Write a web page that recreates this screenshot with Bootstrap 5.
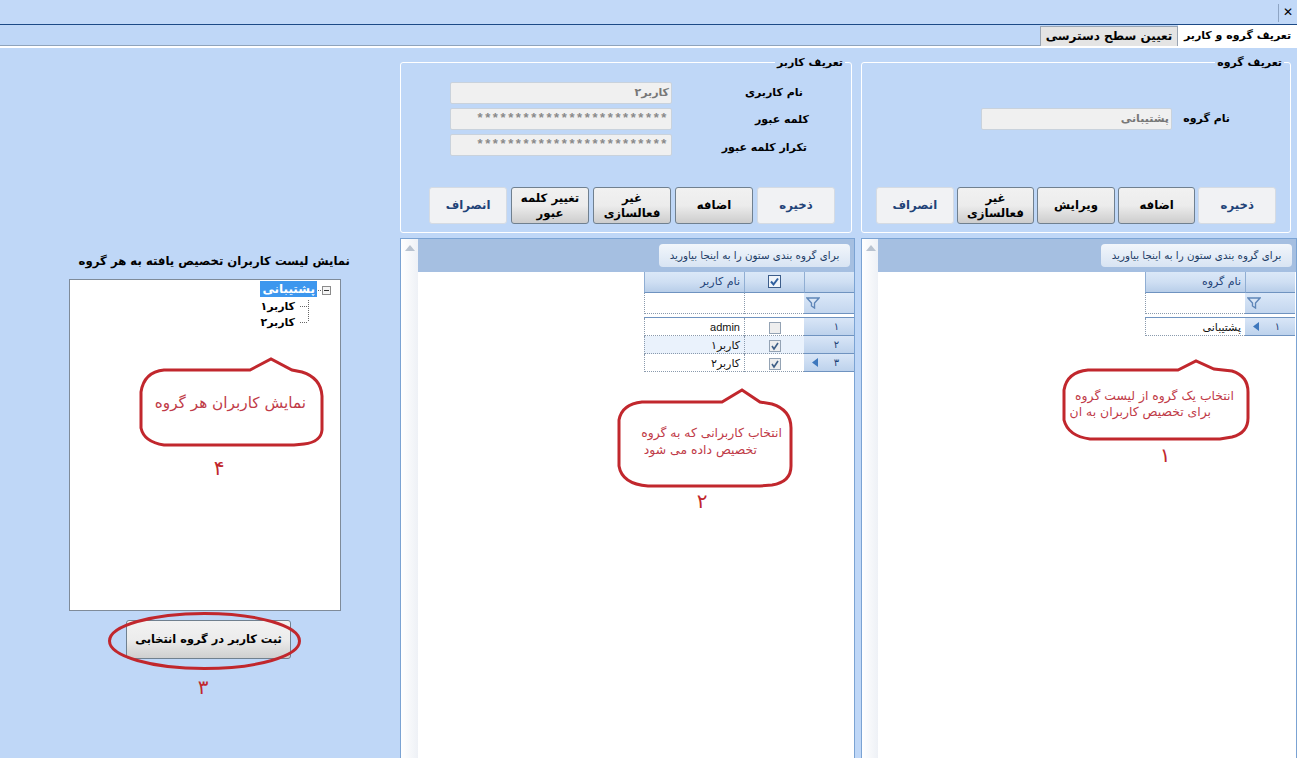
<!DOCTYPE html>
<html lang="fa">
<head>
<meta charset="utf-8">
<title>تعریف گروه و کاربر</title>
<link href="https://cdn.jsdelivr.net/npm/bootstrap@5.3.0/dist/css/bootstrap.min.css" rel="stylesheet">
<style>
html,body{height:758px;overflow:hidden}
body{background:#bfd7f7;font-family:"DejaVu Sans","Liberation Sans",sans-serif;color:#000;position:relative;width:1297px}
.topstrip{height:25px;background:#c2d9f8;border-bottom:1px solid #1c4a86}
.closex{width:19px;height:18px;border-left:1px solid #8ea5c4;margin-top:4px;font-size:12px;line-height:16px;text-align:center;font-weight:700}
.tabstrip{height:23px;background:#bfd7f7;border-bottom:2px solid #fff;box-shadow:inset 0 -1px 0 #8fa3bb;align-items:flex-end}
.tabon{width:119px;height:21px;background:#fff;font-size:11px;font-weight:700;line-height:21px;text-align:center}
.taboff{width:138px;height:20px;background:#e4e4e4;border:1px solid #9aa5b3;border-bottom:0;font-size:12px;font-weight:700;line-height:19px;text-align:center}
.colleft{width:400px}
.colmid{width:461px}
.colright{width:436px}
.grpbox{margin:14px 0 0;height:171px;border:1px solid #fff;border-radius:3px;padding:0;position:relative;min-width:0}
.grpbox legend{float:none;width:auto;font-size:11px;font-weight:700;line-height:14px;margin:0 6px 0 0;padding:0 2px;position:absolute;top:-7px;right:0;background:#bfd7f7}
.w430{width:430px}
.w452{width:452px}
.formrow{height:26px;font-size:11px;font-weight:700}
.fakeinput{height:22px;background:#f0f0f0;border:1px solid #c9d2dc;border-radius:2px;font-size:11px;color:#777;line-height:20px;padding:0 2px;white-space:nowrap;overflow:hidden}
.fakepass{font-family:"Liberation Sans",sans-serif;font-size:13px;letter-spacing:2.600px;line-height:17px;color:#8a8a8a}
.w191{width:191px}
.w222{width:222px}
.lblgrp{width:58px}
.lbluser{width:179px;white-space:nowrap}
.lblfirst{padding-right:48px}
.lblsecond{padding-right:42px;margin-top:2px}
.lblthird{padding-right:44px;margin-top:6px}
.userfirst{margin-top:17px}
.grouprow{margin-top:43px;padding-right:60px}
.btnrow{position:absolute;bottom:8px;display:flex}
.rbtns{right:14px;gap:3px}
.mbtns{right:16px;gap:4px}
.wbtn{width:78px;height:37px;border-radius:3px;font-size:11.7px;font-weight:700;line-height:15px;padding:0;display:flex;align-items:center;justify-content:center;text-align:center}
.rbtns .wbtn{width:77.6px}
.wbtn-light{background:#f1f2f4;border:1px solid #d5dbe3;color:#1f4378}
.wbtn-dark{background:linear-gradient(#f1f1f1 0,#ececec 50%,#cdcdcd 100%);border:1px solid #70808f;color:#000}
.gridpanel{margin-top:5px;height:520px;background:#fff;border:1px solid #7ba3d3;border-bottom:0;display:flex;overflow:hidden}
.w455{width:455px}
.scrollside{width:16px;background:linear-gradient(90deg,#fff,#eef1f6);flex:none;padding:6px 0 0 4px}
.w455 .scrollside{width:17px}
.gridbody{flex:1;min-width:0}
.groupband{height:33px;background:#a5bfe1;padding:5px 4px 0 0}
.groupchip{height:23px;width:191px;background:linear-gradient(#f2f6fb,#d8e4f3);border-radius:4px;font-size:10.3px;line-height:22px;text-align:center;color:#1c3c66;white-space:nowrap}
.gridt{border-collapse:separate;border-spacing:0;font-size:11px;table-layout:fixed}
.gridt td,.gridt th{padding:0;font-weight:400}
.colright .gridt{margin-right:1px}
.colind{width:50px}
.colchk{width:60px}
.colname{width:100px}
.cellhead{height:21px;background:linear-gradient(#dbe8f8 0,#cfdff3 50%,#b8cee9 100%);border-bottom:1px solid #6f93c0;border-left:1px solid #90aed3;color:#1f4378;text-align:right;padding-right:4px!important;font-size:11px}
.cellfilter{height:21px;background:#fff;border-bottom:1px dotted #8a9aad;border-left:1px dotted #8a9aad}
.indfilter{height:21px;background:linear-gradient(#dbe8f8,#c3d6ee);border-bottom:1px solid #6f93c0;padding-left:2px!important}
.gapcell{height:4px;border-bottom:1px solid #6f93c0}
.cellrow{height:18px;border-bottom:1px dotted #8a9aad;border-left:1px dotted #8a9aad;text-align:right;padding-right:4px!important;line-height:16px;color:#111;font-family:"Liberation Sans","DejaVu Sans",sans-serif;font-size:11px}
.altrow{background:#eaf2fc}
.indrow{height:18px;background:linear-gradient(#d9e6f7,#bdd2ec);border-bottom:1px solid #6f93c0;color:#1f4378;font-size:10px}
.indinner{padding:0 15px 0 8px;justify-content:space-between;align-items:center}
.cellcheck{text-align:center!important;padding-right:0!important}
.lefttitle{font-size:11.7px;font-weight:700;text-align:right;width:350px;margin-top:206px;height:25px;line-height:14px;white-space:nowrap}
.treebox{width:272px;height:332px;margin-left:69px;background:#fff;border:1px solid #7f8b99;position:relative;padding:0}
.treenode{position:absolute;font-size:11px;font-weight:700;line-height:16px}
.treesel{right:23px;top:1px;background:#3d97ee;color:#fff;padding:0 2px;font-size:12px}
.treea{right:45px;top:19px}
.treeb{right:45px;top:35px}
.treesvg{position:absolute;right:0;top:0}
.savebtn{width:165px;height:39px;margin:9px 0 0 126px;background:linear-gradient(#f2f2f2 0,#ececec 50%,#cfcfcf 100%);border:1px solid #70808f;border-radius:3px;font-size:11.4px;font-weight:700;padding:0}
.overlay{position:absolute;left:0;top:0;pointer-events:none}
.overlay text{font-family:"DejaVu Sans",sans-serif;font-size:12.400px;fill:#bf3b48;direction:rtl}
.overlay .bignum{font-size:20px;fill:#c1272d;text-anchor:middle}
.overlay .t13{font-size:15.300px}
</style>
</head>
<body>
<div class="topstrip d-flex justify-content-end"><div class="closex">✕</div></div>
<div class="tabstrip d-flex justify-content-end">
  <div class="taboff">تعیین سطح دسترسی</div>
  <div class="tabon">تعریف گروه و کاربر</div>
</div>
<div class="d-flex">
  <div class="colleft">
    <div class="lefttitle" dir="rtl">نمایش لیست کاربران تخصیص یافته به هر گروه</div>
    <div class="treebox">
      <svg class="treesvg" width="60" height="60" viewBox="0 0 60 60">
        <rect x="42.500" y="6.500" width="8" height="8" fill="#f4f4f4" stroke="#8b8b8b"/>
        <path d="M44 10.500h5" stroke="#333"/>
        <path d="M38 10.500h4M28.500 20v22M20 26.500h8M20 42.500h8" stroke="#666" stroke-dasharray="1 1" fill="none"/>
      </svg>
      <div class="treenode treesel">پشتیبانی</div>
      <div class="treenode treea">کاربر۱</div>
      <div class="treenode treeb">کاربر۲</div>
    </div>
    <button class="savebtn d-block text-center" type="button">ثبت کاربر در گروه انتخابی</button>
  </div>

  <div class="colmid">
    <fieldset class="grpbox w452">
      <legend>تعریف کاربر</legend>
      <div class="d-flex flex-column" dir="rtl">
        <div class="formrow d-flex align-items-center userfirst">
          <div class="lbluser lblfirst">نام کاربری</div>
          <div class="fakeinput w222">کاربر۲</div>
        </div>
        <div class="formrow d-flex align-items-center">
          <div class="lbluser lblsecond">کلمه عبور</div>
          <div class="fakeinput fakepass w222">*************************</div>
        </div>
        <div class="formrow d-flex align-items-center">
          <div class="lbluser lblthird">تکرار کلمه عبور</div>
          <div class="fakeinput fakepass w222">*************************</div>
        </div>
      </div>
      <div class="btnrow mbtns" dir="rtl">
        <div class="wbtn wbtn-light">ذخیره</div>
        <div class="wbtn wbtn-dark">اضافه</div>
        <div class="wbtn wbtn-dark">غیر<br>فعالسازی</div>
        <div class="wbtn wbtn-dark">تغییر کلمه<br>عبور</div>
        <div class="wbtn wbtn-light">انصراف</div>
      </div>
    </fieldset>
    <div class="gridpanel w455">
      <div class="scrollside"><svg width="10" height="6" viewBox="0 0 10 6" class="d-block"><path d="M0 6L5 0l5 6z" fill="#b9c3d0"/></svg></div>
      <div class="gridbody">
        <div class="groupband d-flex justify-content-end"><div class="groupchip" dir="rtl">برای گروه بندی ستون را به اینجا بیاورید</div></div>
        <div class="d-flex justify-content-end">
          <table class="gridt" dir="rtl">
            <colgroup><col class="colind"><col class="colchk"><col class="colname"></colgroup>
            <tr>
              <th class="cellhead"></th>
              <th class="cellhead cellcheck"><svg width="13" height="13" viewBox="0 0 13 13"><rect x=".5" y=".5" width="12" height="12" fill="#eef3f9" stroke="#3c5d8a"/><path d="M3 6.500l2.500 3L10 3.500" stroke="#2f5f9e" stroke-width="2" fill="none"/></svg></th>
              <th class="cellhead">نام کاربر</th>
            </tr>
            <tr>
              <td class="indfilter"><div class="d-flex justify-content-end"><svg width="14" height="12" viewBox="0 0 14 12"><path d="M1 1h12L8.500 6v5L5.500 9V6z" fill="#d9e6f6" stroke="#5f86b8" stroke-width="1.400"/></svg></div></td>
              <td class="cellfilter"></td><td class="cellfilter"></td>
            </tr>
            <tr><td class="gapcell" colspan="3"></td></tr>
            <tr>
              <td class="indrow"><div class="d-flex indinner"><span>۱</span></div></td>
              <td class="cellrow cellcheck"><svg width="12" height="12" viewBox="0 0 12 12"><rect x=".5" y=".5" width="11" height="11" fill="#eee" stroke="#94a3b4"/></svg></td>
              <td class="cellrow">admin</td>
            </tr>
            <tr>
              <td class="indrow"><div class="d-flex indinner"><span>۲</span></div></td>
              <td class="cellrow altrow cellcheck"><svg width="12" height="12" viewBox="0 0 12 12"><rect x=".5" y=".5" width="11" height="11" fill="#eee" stroke="#94a3b4"/><path d="M3 6l2 3 4-6" stroke="#3f5f86" stroke-width="1.600" fill="none"/></svg></td>
              <td class="cellrow altrow">کاربر۱</td>
            </tr>
            <tr>
              <td class="indrow"><div class="d-flex indinner"><span>۳</span><svg width="6" height="9" viewBox="0 0 6 9"><path d="M6 0v9L0 4.500z" fill="#3e78bd"/></svg></div></td>
              <td class="cellrow cellcheck"><svg width="12" height="12" viewBox="0 0 12 12"><rect x=".5" y=".5" width="11" height="11" fill="#eee" stroke="#94a3b4"/><path d="M3 6l2 3 4-6" stroke="#3f5f86" stroke-width="1.600" fill="none"/></svg></td>
              <td class="cellrow">کاربر۲</td>
            </tr>
          </table>
        </div>
      </div>
    </div>
  </div>

  <div class="colright">
    <fieldset class="grpbox w430">
      <legend>تعریف گروه</legend>
      <div class="d-flex align-items-center formrow grouprow" dir="rtl">
        <div class="lblgrp text-nowrap">نام گروه</div>
        <div class="fakeinput w191">پشتیبانی</div>
      </div>
      <div class="btnrow rbtns" dir="rtl">
        <div class="wbtn wbtn-light">ذخیره</div>
        <div class="wbtn wbtn-dark">اضافه</div>
        <div class="wbtn wbtn-dark">ویرایش</div>
        <div class="wbtn wbtn-dark">غیر<br>فعالسازی</div>
        <div class="wbtn wbtn-light">انصراف</div>
      </div>
    </fieldset>
    <div class="gridpanel">
      <div class="scrollside"><svg width="10" height="6" viewBox="0 0 10 6" class="d-block"><path d="M0 6L5 0l5 6z" fill="#b9c3d0"/></svg></div>
      <div class="gridbody">
        <div class="groupband d-flex justify-content-end"><div class="groupchip" dir="rtl">برای گروه بندی ستون را به اینجا بیاورید</div></div>
        <div class="d-flex justify-content-end">
          <table class="gridt" dir="rtl">
            <colgroup><col class="colind"><col class="colname"></colgroup>
            <tr><th class="cellhead"></th><th class="cellhead">نام گروه</th></tr>
            <tr>
              <td class="indfilter"><div class="d-flex justify-content-end"><svg width="14" height="12" viewBox="0 0 14 12"><path d="M1 1h12L8.500 6v5L5.500 9V6z" fill="#d9e6f6" stroke="#5f86b8" stroke-width="1.400"/></svg></div></td>
              <td class="cellfilter"></td>
            </tr>
            <tr><td class="gapcell" colspan="2"></td></tr>
            <tr>
              <td class="indrow"><div class="d-flex indinner"><span>۱</span><svg width="6" height="9" viewBox="0 0 6 9"><path d="M6 0v9L0 4.500z" fill="#3e78bd"/></svg></div></td>
              <td class="cellrow">پشتیبانی</td>
            </tr>
          </table>
        </div>
      </div>
    </div>
  </div>
</div>

<svg class="overlay" width="1297" height="758" viewBox="0 0 1297 758">
  <g fill="none" stroke="#c1272d" stroke-width="3">
    <path d="M1088 370L1178 370L1196 361L1214 369L1232 371Q1248 376 1248 392L1248 418Q1248 433 1232 437L1220 439L1090 439Q1068 436 1064 420L1064 390Q1067 372 1088 370Z"/>
    <path d="M642 402L722 402L742 390L760 402L772 404Q791 410 791 428L791 466Q791 482 772 485L760 486L648 486Q622 484 619 466L619 420Q622 404 642 402Z"/>
    <path d="M164 370L250 370L271 359L292 370L302 372Q321 378 322 396L322 430Q321 442 304 444L294 445L164 445Q144 442 141 428L141 392Q144 372 164 370Z"/>
    <ellipse cx="204.500" cy="641" rx="95" ry="27.500"/>
  </g>
  <text x="1234" y="400" dir="rtl">انتخاب یک گروه از لیست گروه</text>
  <text x="1211" y="416" dir="rtl">برای تخصیص کاربران به ان</text>
  <text x="782" y="437" dir="rtl">انتخاب کاربرانی که به گروه</text>
  <text x="757" y="454" dir="rtl">تخصیص داده می شود</text>
  <text class="t13" x="306" y="408" dir="rtl">نمایش کاربران هر گروه</text>
  <text class="bignum" x="1165" y="462">۱</text>
  <text class="bignum" x="702" y="508">۲</text>
  <text class="bignum" x="203" y="694">۳</text>
  <text class="bignum" x="219" y="475">۴</text>
</svg>
</body>
</html>
